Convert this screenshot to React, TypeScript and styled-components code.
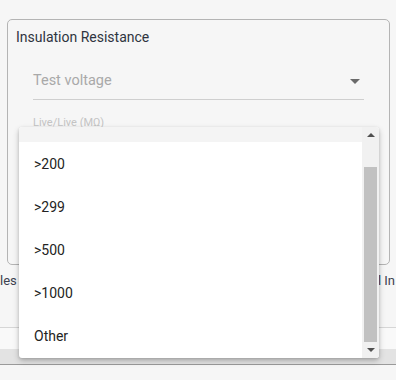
import React from 'react'
import styled, { createGlobalStyle } from 'styled-components'

const GlobalStyle = createGlobalStyle`
    html, body {
        margin: 0;
        padding: 0;
        background: #f6f6f6;
        font-family: Roboto, 'Liberation Sans', sans-serif;
    }
`

const options = ['>200', '>299', '>500', '>1000', 'Other']

const App: React.FC = () => {
    return (
        <StyledPage>
            <GlobalStyle />
            <StyledCard>
                <StyledTitle>Insulation Resistance</StyledTitle>
                <StyledSelectField>
                    <StyledPlaceholder>Test voltage</StyledPlaceholder>
                    <StyledCaret $dir="down" $color="#6a6a6a" />
                </StyledSelectField>
                <StyledSmallLabel>Live/Live (MΩ)</StyledSmallLabel>
            </StyledCard>
            <StyledNoteRow>
                <span>les in</span>
                <span>al In</span>
            </StyledNoteRow>
            <StyledDivider />
            <StyledBottomBar />

            <StyledMenu>
                <StyledMenuBody>
                    <StyledMenuTop />
                    {options.map(option => (
                        <StyledMenuItem key={option}>{option}</StyledMenuItem>
                    ))}
                </StyledMenuBody>
                <StyledScrollbar>
                    <StyledArrowButton>
                        <StyledCaret $dir="up" $color="#505050" $size={4} />
                    </StyledArrowButton>
                    <StyledTrack>
                        <StyledThumb />
                    </StyledTrack>
                    <StyledArrowButton>
                        <StyledCaret $dir="down" $color="#505050" $size={4} />
                    </StyledArrowButton>
                </StyledScrollbar>
            </StyledMenu>
        </StyledPage>
    )
}

const StyledPage = styled.div`
    position: relative;
    width: 396px;
    height: 380px;
    overflow: hidden;
    padding-top: 19px;
    box-sizing: border-box;
`

const StyledCard = styled.div`
    margin: 0 6px 0 7px;
    height: 246px;
    box-sizing: border-box;
    border: 1px solid #b4b4b4;
    border-radius: 5px;
    padding: 8px 25px 0 8px;
`

const StyledTitle = styled.div`
    font-size: 14px;
    line-height: 18px;
    color: #2f3440;
`

const StyledSelectField = styled.div`
    display: flex;
    align-items: center;
    justify-content: space-between;
    margin: 23px 0 0 17px;
    height: 30px;
    border-bottom: 1px solid #cfcfcf;
    padding: 0 4px 0 0;
`

const StyledPlaceholder = styled.span`
    font-size: 14.5px;
    color: #a9a9a9;
    margin-top: -8px;
`

const StyledCaret = styled.span<{ $dir: 'up' | 'down', $color: string, $size?: number }>`
    width: 0;
    height: 0;
    border-left: ${p => p.$size ?? 5}px solid transparent;
    border-right: ${p => p.$size ?? 5}px solid transparent;
    ${p => p.$dir === 'down'
        ? `border-top: ${p.$size ?? 5}px solid ${p.$color};`
        : `border-bottom: ${p.$size ?? 5}px solid ${p.$color};`}
    margin-top: ${p => p.$dir === 'down' && !p.$size ? '-6px' : '0'};
`

const StyledSmallLabel = styled.div`
    margin: 16px 0 0 17px;
    font-size: 11px;
    line-height: 13px;
    color: #c4c4c4;
`

const StyledNoteRow = styled.div`
    display: flex;
    justify-content: space-between;
    margin-top: 7px;
    height: 18px;
    font-size: 13px;
    line-height: 18px;
    color: #3d4250;
    white-space: nowrap;
    padding-right: 1px;
`

const StyledDivider = styled.div`
    margin-top: 37px;
    border-top: 1px solid #d6d6d6;
    height: 21px;
    background: #f9f9f9;
`

const StyledBottomBar = styled.div`
    height: 15px;
    background: #e3e3e3;
    border-bottom: 1px solid #9a9a9a;
`

const StyledMenu = styled.div`
    position: absolute;
    left: 19px;
    top: 127px;
    width: 360px;
    height: 231px;
    display: flex;
    background: #fff;
    border-radius: 3px;
    overflow: hidden;
    box-shadow: 0 3px 6px rgba(0, 0, 0, 0.22), 0 1px 3px rgba(0, 0, 0, 0.14);
`

const StyledMenuBody = styled.div`
    flex: 1;
    display: flex;
    flex-direction: column;
`

const StyledMenuTop = styled.div`
    height: 15px;
    background: #f4f4f4;
`

const StyledMenuItem = styled.div`
    height: 43.5px;
    display: flex;
    align-items: center;
    padding-left: 15px;
    font-size: 14px;
    color: #232323;
`

const StyledScrollbar = styled.div`
    width: 17px;
    background: #f1f1f1;
    display: flex;
    flex-direction: column;
`

const StyledArrowButton = styled.div`
    height: 17px;
    display: flex;
    align-items: center;
    justify-content: center;
`

const StyledTrack = styled.div`
    flex: 1;
    padding: 23px 2px 0 2px;
`

const StyledThumb = styled.div`
    height: 175px;
    background: #c1c1c1;
`

export default App
